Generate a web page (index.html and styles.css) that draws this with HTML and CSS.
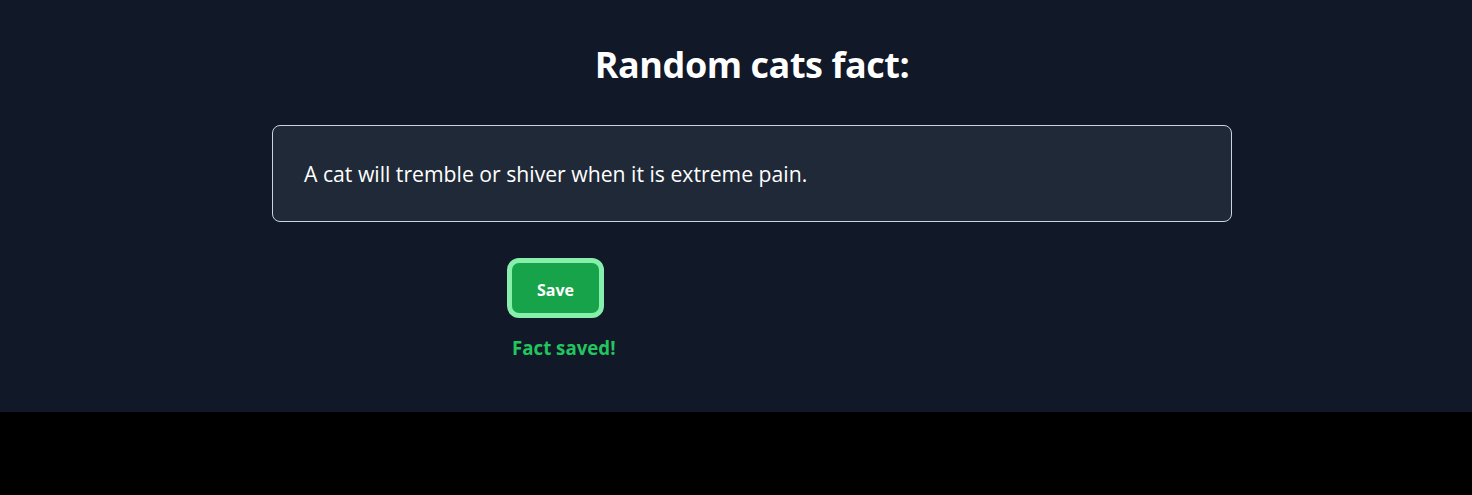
FILE: index.html
```html
<!DOCTYPE html>
<html>
<head>
<meta charset="utf-8">
<link rel="stylesheet" href="styles.css">
</head>
<body>
<main class="page">
  <div class="content">
    <h1 class="title">Random cats fact:</h1>
    <div class="fact-box">
      <p class="fact">A cat will tremble or shiver when it is extreme pain.</p>
    </div>
    <div class="actions">
      <button class="save-btn">Save</button>
      <p class="status">Fact saved!</p>
    </div>
  </div>
</main>
</body>
</html>
```
FILE: styles.css
```css
html, body {
  margin: 0;
  padding: 0;
  background: #000;
}
body {
  font-family: "Open Sans", "Noto Sans", sans-serif;
  color: #fff;
}
.page {
  background: #111827;
  height: 412px;
  padding-left: 32px;
  box-sizing: border-box;
  display: flex;
  justify-content: center;
}
.content {
  width: 960px;
  display: flex;
  flex-direction: column;
  align-items: center;
}
.title {
  margin: 41px 0 0;
  font-size: 36px;
  line-height: 48px;
  font-weight: 700;
  letter-spacing: -0.45px;
}
.fact-box {
  align-self: stretch;
  margin-top: 36px;
  height: 97px;
  box-sizing: border-box;
  background: #1f2937;
  border: 1px solid #cbd5e1;
  border-radius: 8px;
  padding: 1px 31px 0;
  display: flex;
  align-items: center;
}
.fact {
  margin: 0;
  font-size: 21.2px;
  line-height: 28px;
}
.actions {
  align-self: stretch;
  padding-left: 235px;
  margin-top: 36px;
  display: flex;
  flex-direction: column;
  align-items: flex-start;
}
.save-btn {
  width: 97px;
  height: 60px;
  box-sizing: border-box;
  padding: 3px 0 0;
  background: #16a34a;
  border: 5px solid #86efac;
  border-radius: 12px;
  color: #fff;
  font-family: inherit;
  font-size: 16px;
  font-weight: 700;
  cursor: pointer;
}
.status {
  margin: 18px 0 0 5px;
  color: #22c55e;
  font-size: 18.7px;
  font-weight: 700;
  line-height: 24px;
}
```
